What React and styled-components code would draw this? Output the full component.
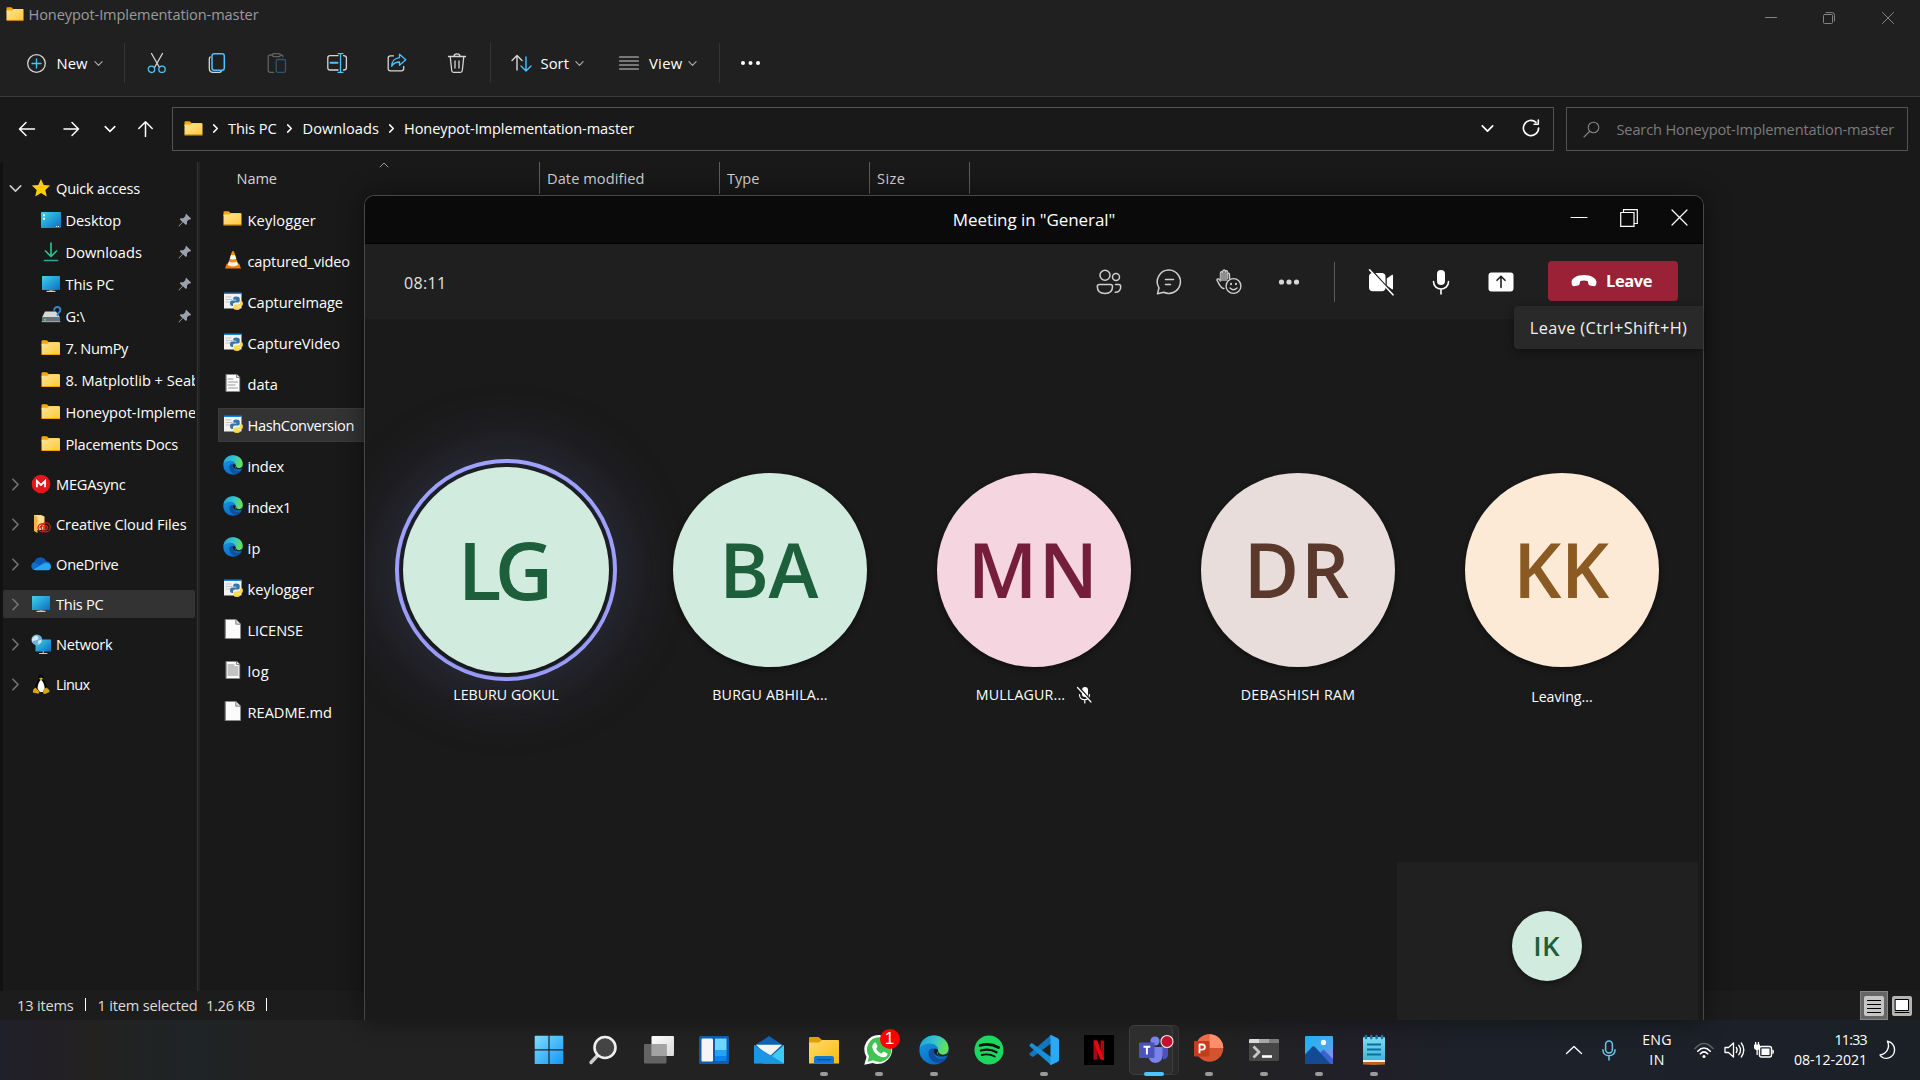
import React, { useLayoutEffect, useRef, useState } from "react";
import styled, { createGlobalStyle, css } from "styled-components";

const GlobalStyle = createGlobalStyle`
  * { box-sizing: border-box; }
  html, body { margin: 0; padding: 0; background: #191919; overflow: hidden; }
  body { font-family: "Open Sans", "Noto Sans", sans-serif; color: #fff; }
  svg { display: block; flex: none; overflow: visible; }
`;

/* ---------- text that keeps a given advance width ---------- */

const TextSpan = styled.span`
  display: block;
  flex: none;
  white-space: nowrap;
  font-size: ${(p) => p.$size || 14.6}px;
  font-weight: ${(p) => p.$weight || 400};
  color: ${(p) => p.$color || "#fff"};
  line-height: 20px;
`;

function Text({ width, size, weight, color, children }) {
  const ref = useRef(null);
  const [spacing, setSpacing] = useState(0);
  useLayoutEffect(() => {
    if (!width || !ref.current) return;
    const range = document.createRange();
    range.selectNodeContents(ref.current);
    const natural = range.getBoundingClientRect().width;
    setSpacing((width + 1.5 - natural) / String(children).length);
  }, [width, children]);
  return (
    <TextSpan
      ref={ref}
      $size={size}
      $weight={weight}
      $color={color}
      style={{ letterSpacing: `${spacing}px` }}
    >
      {children}
    </TextSpan>
  );
}

/* ---------- icons ---------- */

const Icon = ({ w = 20, h = w, vb, children, stroke = "none", sw = 1.3, fill = "none" }) => (
  <svg
    width={w}
    height={h}
    viewBox={vb || `0 0 ${w} ${h}`}
    fill={fill}
    stroke={stroke}
    strokeWidth={sw}
    strokeLinecap="round"
    strokeLinejoin="round"
  >
    {children}
  </svg>
);

const BLUE = "#4cc2ff";

const Chevron = ({ dir = "down", w = 8, color = "#bdbdbd", sw = 1.3 }) => {
  const d = { down: "M1 3l4 4 4-4", right: "M3 1l4 4-4 4", up: "M1 7l4-4 4 4" }[dir];
  return (
    <Icon w={w} vb="0 0 10 10" stroke={color} sw={sw * (10 / w)}>
      <path d={d} />
    </Icon>
  );
};

const FolderIcon = ({ w = 19 }) => (
  <Icon w={w} h={(w * 15) / 19} vb="0 0 19 15">
    <path d="M.5 1.2Q.5.3 1.4.3h4.2L7.6 2h10v3H.5z" fill="#f5a800" />
    <path d="M.5 3.6h6l1.600-1.400h9.800q.6 0 .6.6v11H.5z" fill="url(#folderGrad)" />
    <path d="M.5 13.6h18v.9H.5z" fill="#f0a30a" />
  </Icon>
);

const HiddenSvg = styled.svg`
  position: absolute;
`;

const SharedDefs = () => (
  <HiddenSvg width="0" height="0">
    <defs>
      <linearGradient id="folderGrad" x1="0" y1="0" x2="1" y2="1">
        <stop offset="0" stopColor="#ffe49a" />
        <stop offset="1" stopColor="#ffc93a" />
      </linearGradient>
      <linearGradient id="pcGrad" x1="0" y1="0" x2="1" y2="1">
        <stop offset="0" stopColor="#3fd4e6" />
        <stop offset="1" stopColor="#0b6cc4" />
      </linearGradient>
      <linearGradient id="edgeTop" x1="0" y1="0.3" x2="1" y2="0.6">
        <stop offset="0" stopColor="#1aa5e0" />
        <stop offset=".5" stopColor="#36c6c8" />
        <stop offset="1" stopColor="#6be347" />
      </linearGradient>
      <linearGradient id="edgeLeft" x1="0" y1="0" x2="0.6" y2="1">
        <stop offset="0" stopColor="#1b9de0" />
        <stop offset="1" stopColor="#0669c9" />
      </linearGradient>
      <linearGradient id="winGrad" x1="0" y1="0" x2="1" y2="1">
        <stop offset="0" stopColor="#7fdcff" />
        <stop offset="1" stopColor="#1397f5" />
      </linearGradient>
      <linearGradient id="grayGrad" x1="0" y1="0" x2="1" y2="1">
        <stop offset="0" stopColor="#ffffff" />
        <stop offset="1" stopColor="#d8d8d8" />
      </linearGradient>
      <linearGradient id="photoGrad" x1="0" y1="0" x2="1" y2="1">
        <stop offset="0" stopColor="#1fb0f0" />
        <stop offset=".6" stopColor="#4aa8ee" />
        <stop offset="1" stopColor="#a97fe0" />
      </linearGradient>
      <linearGradient id="noteGrad" x1="0" y1="0" x2="0" y2="1">
        <stop offset="0" stopColor="#7fdcf0" />
        <stop offset="1" stopColor="#3fb2dc" />
      </linearGradient>
      <linearGradient id="explorerGrad" x1="0" y1="0" x2="1" y2="1">
        <stop offset="0" stopColor="#ffdc6b" />
        <stop offset="1" stopColor="#fcb814" />
      </linearGradient>
    </defs>
  </HiddenSvg>
);

const EdgeIcon = ({ w = 20 }) => (
  <Icon w={w} vb="0 0 30 30">
    <circle cx="15" cy="15" r="14.6" fill="url(#edgeLeft)" />
    <path
      d="M9.5 17.5c0 6 4.5 10.5 10 10.5 3 0 6-1.6 8-5-7 2.6-12.2-.6-12.2-5 0-1.6.9-2.9 1.8-3.6-3-2-7.6 0-7.6 3.1z"
      fill="#114f9e"
    />
    <path
      d="M.6 13C1.6 5 7.6.4 15 .4c8.4 0 14.6 6 14.6 12.6 0 4.4-3.4 7-7 7-3.4 0-4.8-1.2-4.8-1.8 0-.8 1.3-1.2 1.3-3.4C19.1 11.6 15.6 8.6 11 8.6c-4.6 0-8.4 1.8-10.4 4.4z"
      fill="url(#edgeTop)"
    />
    <path d="M29.8 19.6c-2.3 2.3-7.3 2.3-9.5.9-2.9-1.6-1.3-2.2-1.1-4.6.3 3.6 6 5.5 10.1 2.2z" fill="#202020" />
    <path d="M15.2 14.3c1.4-1.1 3.9-.3 3.9 1.5 0 1.3-1.3 1.6-1.3 2.5-.2 1.2 1.7 3.3 5.2 2.9-4.5 1.2-9-1.9-7.8-6.9z" fill="#1b1b1b" />
  </Icon>
);

const PcIcon = ({ w = 20 }) => (
  <Icon w={w} h={w} vb="0 0 20 20">
    <rect x="1" y="2" width="18" height="14" rx=".6" fill="url(#pcGrad)" />
    <path d="M8.5 16h3v1.5h-3z" fill="#7c8790" />
    <path d="M6 17.3h8" stroke="#c6ced4" strokeWidth="1.2" />
  </Icon>
);

const PyIcon = () => (
  <Icon w={20} vb="0 0 20 20">
    <rect x="1" y="2" width="17.5" height="15.5" fill="#f2f2f2" />
    <rect x="1" y="1.5" width="17.5" height="1.5" fill="#1783d8" />
    <path d="M3 6h5M3 8.5h6M3 11h4" stroke="#b9bec4" strokeWidth=".9" />
    <path
      d="M13 5.5c-2.5 0-2.7 1-2.7 2v1.3h3v.7H9c-1.3 0-2 1.1-2 2.8s.7 2.7 2 2.7h1v-1.5c0-1.2 1-2 2.1-2h3c.9 0 1.6-.8 1.6-1.7V7.5c0-1.2-1.2-2-3.7-2z"
      fill="#3775ab"
    />
    <path
      d="M14.2 19c2.4 0 2.7-1 2.7-2v-1.2h-3v-.6h4.2c1.3 0 1.8-1.2 1.8-2.7s-.6-2.5-1.8-2.5h-.9v1.4c0 1.2-1 2-2.1 2h-3c-.9 0-1.6.8-1.6 1.7V17c0 1.2 1.3 2 3.7 2z"
      fill="#ffd94a"
    />
  </Icon>
);

const DocIcon = ({ lines = 0 }) => {
  const small = lines > 0;
  return (
    <Icon w={20} vb="0 0 20 20">
      <path
        d={small ? "M3.3 1.5h10.7l2.7 2.7v14.3H3.3z" : "M2.5.5h10.5l4.5 4.5v14.5h-15z"}
        fill="#fbfbfb"
        stroke="#8a8a8a"
        strokeWidth=".8"
      />
      <path
        d={small ? "M13.5 1.5v3h3.2" : "M12.8.5v4.7h4.7"}
        fill="#d9d9d9"
        stroke="#6d6d6d"
        strokeWidth=".8"
      />
      {lines === 4 && <path d="M5 6h5M5.5 9h9M5 12h7M5.5 15h9" stroke="#8c8c8c" strokeWidth=".9" />}
      {lines === 7 && (
        <path d="M5 5h6M5 7h10M5 9h10M5 11h10M5 13h10M5 15h10" stroke="#7d7d7d" strokeWidth=".9" />
      )}
    </Icon>
  );
};

const VlcIcon = () => (
  <Icon w={20} vb="0 0 20 20">
    <path d="M3.8 13.5h12.4l1.8 5H2z" fill="#f57c00" />
    <path d="M9 1.5q1-1 2 0l4.3 13.5q-5.3 3-10.6 0z" fill="#ff8a00" />
    <path d="M8 5h4l1.2 3.8q-3.2 1.4-6.4 0z" fill="#fff" />
    <path d="M5.900 11.6q4.1 1.8 8.2 0l1.1 3.5q-5.2 2.8-10.4 0z" fill="#f4f4f4" />
  </Icon>
);

const StarIcon = () => (
  <Icon w={20} vb="0 0 20 20">
    <path d="M10 1l2.7 6 6.5.6-4.9 4.3 1.5 6.600L10 15.100l-5.800 3.400 1.500-6.600L.8 7.6 7.3 7z" fill="#ffcb0d" />
  </Icon>
);

const DesktopIcon = () => (
  <Icon w={20} vb="0 0 20 20">
    <rect x="0" y="2" width="20" height="16" rx=".8" fill="url(#pcGrad)" />
    <path d="M2 4.3h2v2H2zM2 7.7h2v2H2zM15.2 16h1v1h-1zM17 16h1v1h-1z" fill="#fff" />
  </Icon>
);

const DownloadIcon = () => (
  <Icon w={20} vb="0 0 20 20" stroke="#2fbf8f" sw={1.7}>
    <path d="M10 1v13M4.5 9l5.5 5.5L15.5 9" />
    <path d="M3.5 18.5h13" stroke="#2aa79b" />
  </Icon>
);

const DriveIcon = () => (
  <Icon w={20} vb="0 0 20 20">
    <path d="M4 5.5h11l4 6H1z" fill="#d5d9dc" />
    <rect x="1" y="11" width="18" height="5" rx=".6" fill="#6b7176" />
    <path d="M1 15.7h18" stroke="#b8bdc1" strokeWidth=".8" />
    <rect x="3" y="13" width="2" height="1.5" fill="#37e05a" />
    <path d="M13.2 4c0-4 6.2-4 6.2 0 0 2.5-2.8 2.4-2.9 5M16.4 11.8v.2" stroke="#2f86d0" strokeWidth="1.9" />
  </Icon>
);

const PinIcon = () => (
  <Icon w={14} vb="0 0 14 14">
    <path d="M8.200.8l5 5-1 .8-1.300-.1-2 2 .1 2.600-1.100 1-2.900-2.900L1 13.400l-.5-.5L4.400 9 1.700 6.200l1-1 2.600 0 2.200-2.100V1.600z" fill="#9aa3ab" />
  </Icon>
);

const MegaIcon = () => (
  <Icon w={20} vb="0 0 20 20">
    <circle cx="10" cy="10" r="9.3" fill="#e8141c" />
    <path d="M5.9 13.3V7l4.1 4 4.1-4v6.3" stroke="#fff" strokeWidth="1.9" strokeLinecap="butt" strokeLinejoin="miter" />
  </Icon>
);

const CreativeIcon = () => (
  <Icon w={20} vb="0 0 20 20">
    <path d="M3 1h7l3.500 1.500V16H3z" fill="#ffdf8c" />
    <path d="M3 1l3.500 2v16L3 17z" fill="#f2b544" />
    <g stroke="#e0160f" strokeWidth="1.2">
      <circle cx="11" cy="13.8" r="4" />
      <circle cx="14.8" cy="13.3" r="4.5" />
      <path d="M9 14a2 2 0 1 1 3.5 1.2M14 15.5a2 2 0 1 0-.4-3.5" />
    </g>
  </Icon>
);

const OneDriveIcon = () => (
  <Icon w={20} vb="0 0 20 20">
    <path d="M3 16A4.2 4.2 0 0 1 3.6 8 6 6 0 0 1 15 7.200c3 .2 4.600 2 4.900 4.300L9 16z" fill="#0f6fd0" />
    <path d="M5 5.800a6 6 0 0 1 10 1.400l-6 4.600-5.500-3.700z" fill="#0a5bb5" />
    <path d="M2.500 15.500L12 9.800c4-2 8 .2 8 3 0 2-1.300 3.500-3.300 3.500H4.500z" fill="#2aa5f0" />
  </Icon>
);

const NetworkIcon = () => (
  <Icon w={20} vb="0 0 20 20">
    <rect x="4.5" y="5.5" width="15.5" height="12" fill="url(#pcGrad)" />
    <path d="M8.500 19.500h7.500M12.200 17.500v2" stroke="#c6ced4" strokeWidth="1" />
    <circle cx="5.8" cy="5.8" r="5.4" fill="#6fb3d6" />
    <path d="M2 3.5q3-3 5-.5T4 6.5 3.5 10q-3-2-2.5-5zM7 7q3-2 3.8 0-1 3-3.5 3.5z" fill="#cfe9f5" />
  </Icon>
);

const TuxIcon = () => (
  <Icon w={20} vb="0 0 20 20">
    <path d="M10 .5c-2.300 0-3 1.800-2.800 4.300C7 7.500 4 10.500 4 14.500L7 18h6l3-3.500c0-4-3-7-3.200-9.700C13 2.300 12.300.5 10 .5z" fill="#050505" />
    <path d="M10 5.500c-1.500 1.300-4 6-3.200 9.500L9 18h3l1.500-3c.7-3.500-2-8.200-3.500-9.500z" fill="#fff" />
    <path d="M8 4.600l2-1 2.200 1L10 6.500z" fill="#e5a50d" />
    <path d="M4.500 13.500l4 4.300-1 1.900-5.700-1.200.5-3zM15.500 13.500l2.700 2.500.3 2-4.500 2-2-.8.500-4z" fill="#dba311" />
  </Icon>
);

/* ---------- explorer layout ---------- */

const Desktop = styled.div`
  position: relative;
  width: 1920px;
  height: 1080px;
  overflow: hidden;
  display: flex;
  flex-direction: column;
  background: #191919;
`;

const TitleBar = styled.header`
  display: flex;
  height: 32px;
  background: #202020;
  padding: 4px 3px 0 6px;
`;

const TitleFolder = styled.div`
  width: 22.5px;
  padding-top: 3px;
`;

const CaptionButtons = styled.div`
  display: flex;
  margin: 1px 0 0 auto;
`;

const CaptionButton = styled.div`
  width: ${(p) => p.$w || 58.5}px;
  height: 27px;
  display: flex;
  align-items: center;
  justify-content: center;
  padding-bottom: 2px;
`;

const CommandBar = styled.div`
  display: flex;
  align-items: center;
  height: 65px;
  padding: 0 0 2px 27px;
  background: #202020;
  border-bottom: 1px solid #3b3b3b;
`;

const CommandGroup = styled.div`
  display: flex;
  align-items: center;
  width: ${(p) => p.$w}px;
`;

const Gap = styled.div`
  flex: none;
  width: ${(p) => p.$w}px;
`;

const CommandCell = styled.div`
  width: 60px;
  display: flex;
  justify-content: center;
`;

const Divider = styled.div`
  width: 1px;
  height: 40px;
  background: ${(p) => p.$color || "#343434"};
  margin: 0 ${(p) => p.$right || 0}px 0 0;
`;

const AddressRow = styled.div`
  display: flex;
  align-items: center;
  height: 65px;
  padding: 0 12px 1px 17px;
`;

const NavButtons = styled.nav`
  display: flex;
  align-items: center;
  width: 155px;
`;

const NavSlot = styled.div`
  width: ${(p) => p.$w}px;
  display: flex;
`;

const FieldBox = styled.div`
  display: flex;
  align-items: center;
  height: 44px;
  border: 1px solid #535353;
  width: ${(p) => p.$w}px;
  margin-right: ${(p) => p.$mr || 0}px;
  padding: 0 0 ${(p) => p.$pb || 0}px ${(p) => p.$pl}px;
`;

const Crumb = styled.div`
  display: flex;
  align-items: center;
`;

const Body = styled.main`
  display: flex;
  flex: 1;
  min-height: 0;
`;

const Sidebar = styled.aside`
  width: 196px;
  padding-top: 10px;
  border-left: 3px solid #111;
  overflow: hidden;
`;

const Splitter = styled.div`
  width: 4px;
  background: linear-gradient(90deg, #1d1d1d 0 1px, #303030 1px 2px, #222 2px);
`;

const TreeRow = styled.div`
  display: flex;
  align-items: center;
  height: ${(p) => (p.$root ? 28 : 32)}px;
  margin: ${(p) => (p.$root ? "0 1px 12px 0" : "0 1px 0 0")};
  padding-left: ${(p) => p.$pl}px;
  border-radius: 2px;
  overflow: hidden;
  background: ${(p) => (p.$active ? "#333333" : "transparent")};
`;

const RootList = styled.div`
  padding-top: 10px;
`;

const TreeIcon = styled.div`
  width: ${(p) => p.$w}px;
  flex: none;
  display: flex;
  align-items: center;
  padding-bottom: 1px;
`;

const PinSlot = styled.div`
  margin-left: auto;
  padding-right: 3px;
`;

const FilePane = styled.section`
  flex: 1;
`;

const HeaderRow = styled.div`
  display: flex;
  height: 32px;
`;

const HeaderCell = styled.div`
  position: relative;
  width: ${(p) => p.$w}px;
  padding: 6px 0 0 ${(p) => p.$pl}px;
  border-right: 1px solid #5e5e5e;
`;

const SortCaret = styled.div`
  position: absolute;
  left: 179px;
  top: -2px;
`;

const FileRow = styled.div`
  display: flex;
  align-items: center;
  height: 34px;
  margin: 0 0 7px 18px;
  padding-left: 4px;
  width: 320px;
  border: 1px solid ${(p) => (p.$selected ? "#3c3c3c" : "transparent")};
  background: ${(p) => (p.$selected ? "#333333" : "transparent")};
`;

const FileList = styled.div`
  padding-top: 9px;
`;

const FileIcon = styled.div`
  width: 24.5px;
  padding-bottom: 3px;
`;

const StatusBar = styled.footer`
  display: flex;
  align-items: center;
  height: 29px;
  background: #1c1c1c;
  padding: 0 8px 0 17px;
`;

const StatusTexts = styled.div`
  display: flex;
  align-items: center;
  padding-bottom: 2px;
`;

const StatusMark = styled.div`
  width: 1px;
  height: 13px;
  background: #fff;
  margin: 0 ${(p) => p.$right || 0}px 0 11px;
`;

const ViewModes = styled.div`
  display: flex;
  align-items: center;
  margin-left: auto;
  gap: 4px;
  height: 29px;
`;

const ViewMode = styled.div`
  display: flex;
  align-items: center;
  justify-content: center;
  width: ${(p) => (p.$active ? 28 : 20)}px;
  height: 29px;
  ${(p) =>
    p.$active &&
    css`
      background: #666;
      border: 1px solid #868686;
    `}
`;

/* ---------- meeting window ---------- */

const MeetingWindow = styled.section`
  position: absolute;
  left: 364px;
  top: 195px;
  width: 1340px;
  height: 825px;
  display: flex;
  flex-direction: column;
  border: 1px solid #474747;
  border-bottom: 0;
  border-radius: 10px 10px 0 0;
  background: #1a1a1a;
  box-shadow: 0 0 26px rgba(0, 0, 0, 0.45);
`;

const MeetingTitle = styled.div`
  display: grid;
  grid-template-columns: 1fr auto 1fr;
  align-items: center;
  height: 48px;
  background: #0a0a0a;
  border-bottom: 1px solid #000;
  border-radius: 9px 9px 0 0;
`;

const MeetingCaption = styled.div`
  grid-column: 3;
  display: flex;
  justify-content: flex-end;
  padding-bottom: 2px;
  margin-right: -1px;
`;

const MeetingToolbar = styled.div`
  display: flex;
  align-items: center;
  height: 75px;
  background: #1f1f1f;
  padding-left: 39px;
`;

const Timer = styled.div`
  padding-top: 2px;
`;

const ToolCells = styled.div`
  display: flex;
  align-items: center;
  margin-left: auto;
`;

const ToolCell = styled.div`
  width: 60px;
  display: flex;
  justify-content: center;
`;

const LeaveButton = styled.button`
  display: flex;
  align-items: center;
  width: 130px;
  height: 40px;
  margin: 0 25px 1px 17px;
  padding: 0 0 0 23px;
  border: 0;
  border-radius: 4px;
  background: #9a2136;
  font-family: inherit;
`;

const Tooltip = styled.div`
  position: absolute;
  right: 0;
  top: 110px;
  width: 189px;
  height: 43px;
  display: flex;
  align-items: center;
  justify-content: center;
  background: #292929;
  border-radius: 4px 0 0 4px;
  box-shadow: 0 2px 8px rgba(0, 0, 0, 0.4);
`;

const Stage = styled.div`
  flex: 1;
  display: flex;
  flex-direction: column;
  overflow: hidden;
`;

const Participants = styled.div`
  display: grid;
  grid-template-columns: repeat(5, 264px);
  justify-content: center;
  padding-top: 140px;
`;

const Participant = styled.div`
  display: flex;
  flex-direction: column;
  align-items: center;
`;

const AvatarSlot = styled.div`
  display: flex;
  align-items: center;
  justify-content: center;
  width: 222px;
  height: 222px;
  border-radius: 50%;
  ${(p) =>
    p.$speaking &&
    css`
      border: 4px solid #9ea2ff;
      background: #20202a;
      box-shadow: 0 0 70px 8px rgba(120, 120, 200, 0.22);
    `}
`;

const Avatar = styled.div`
  display: flex;
  align-items: center;
  justify-content: center;
  flex: none;
  width: ${(p) => p.$d}px;
  height: ${(p) => p.$d}px;
  padding: 0 ${(p) => p.$nudge || 0}px ${(p) => (p.$d > 100 ? 3 : 1)}px 0;
  border-radius: 50%;
  background: ${(p) => p.$bg};
  box-shadow: 0 2px 6px rgba(0, 0, 0, 0.45);
`;

const NameLine = styled.div`
  display: flex;
  align-items: center;
  gap: 12px;
  margin-top: ${(p) => p.$top}px;
`;

const SelfView = styled.div`
  display: flex;
  justify-content: center;
  align-self: flex-end;
  width: 301px;
  height: 158px;
  margin: auto 5px 0 0;
  padding: 49px 2px 0 0;
  background: #202020;
`;

/* ---------- taskbar ---------- */

const Taskbar = styled.footer`
  display: flex;
  align-items: stretch;
  height: 60px;
  background: linear-gradient(
    90deg,
    #20202b 0,
    #221f25 45px,
    #232221 90px,
    #1f2426 195px,
    #222222 260px,
    #222222 1220px,
    #211f28 1370px,
    #1d2129 1460px,
    #1c2028 1800px,
    #1b2027 1920px
  );
`;

const Apps = styled.div`
  display: flex;
  align-items: stretch;
  padding-left: 521px;
`;

const AppSlot = styled.div`
  position: relative;
  width: 55px;
  padding-top: 15px;
  display: flex;
  flex-direction: column;
  align-items: center;
`;

const ActiveTile = styled.div`
  position: absolute;
  left: 3px;
  top: 5px;
  width: 44px;
  height: 50px;
  border: 1px solid #3f3f3f;
  border-radius: 5px;
  background: #2e2e2e;
  box-shadow: 6px 0 0 -1px #292929, 6px 0 0 0 #353535;
`;

const AppIcon = styled.div`
  position: relative;
  height: 30px;
`;

const Indicator = styled.div`
  position: relative;
  width: ${(p) => (p.$active ? 20 : 8)}px;
  height: 4px;
  margin-top: 7px;
  border-radius: 2px;
  background: ${(p) => (p.$active ? BLUE : "#9a9a9a")};
`;

const Badge = styled.div`
  position: absolute;
  right: -6px;
  top: -6px;
  width: 20px;
  height: 20px;
  border-radius: 50%;
  background: #ff0000;
  color: #fff;
  font: 17px/20px "Liberation Sans", sans-serif;
  text-align: center;
`;

const Tray = styled.div`
  display: flex;
  align-items: center;
  margin-left: auto;
  width: 356px;
`;

const TraySlot = styled.div`
  display: flex;
  flex: none;
  flex-direction: column;
  align-items: ${(p) => p.$align || "center"};
  width: ${(p) => p.$w}px;
`;

/* ---------- data ---------- */

const quickItems = [
  { label: "Desktop", width: 54, icon: <DesktopIcon />, pinned: true },
  { label: "Downloads", width: 75, icon: <DownloadIcon />, pinned: true },
  { label: "This PC", width: 47, icon: <PcIcon />, pinned: true },
  { label: "G:\\", width: 18, icon: <DriveIcon />, pinned: true },
  { label: "7. NumPy", width: 61, folder: true },
  { label: "8. Matplotlib + Seab", width: 133, folder: true },
  { label: "Honeypot-Impleme", width: 129, folder: true },
  { label: "Placements Docs", width: 111, folder: true },
];

const rootItems = [
  { label: "MEGAsync", width: 68, icon: <MegaIcon /> },
  { label: "Creative Cloud Files", width: 129, icon: <CreativeIcon /> },
  { label: "OneDrive", width: 61, icon: <OneDriveIcon /> },
  { label: "This PC", width: 46, icon: <PcIcon />, active: true },
  { label: "Network", width: 55, icon: <NetworkIcon /> },
  { label: "Linux", width: 32, icon: <TuxIcon /> },
];

const files = [
  ["Keylogger", 67, <FolderIcon />],
  ["captured_video", 101, <VlcIcon />],
  ["CaptureImage", 94, <PyIcon />],
  ["CaptureVideo", 91, <PyIcon />],
  ["data", 29, <DocIcon lines={4} />],
  ["HashConversion", 105, <PyIcon />],
  ["index", 35, <EdgeIcon />],
  ["index1", 42, <EdgeIcon />],
  ["ip", 12, <EdgeIcon />],
  ["keylogger", 65, <PyIcon />],
  ["LICENSE", 54, <DocIcon />],
  ["log", 20, <DocIcon lines={7} />],
  ["README.md", 83, <DocIcon />],
];

const people = [
  { initials: "LG", iw: 87, nudge: 8, size: 80.5, d: 206, bg: "#d1ecdf", fg: "#1d5f3b", name: "LEBURU GOKUL", nw: 104, speaking: true },
  { initials: "BA", iw: 97, nudge: 3, size: 75.5, d: 194, bg: "#d1ecdf", fg: "#1d5f3b", name: "BURGU ABHILA...", nw: 114 },
  { initials: "MN", iw: 130, nudge: 1, size: 75.5, d: 194, bg: "#f5d5e0", fg: "#741e3c", name: "MULLAGUR...", nw: 88, muted: true },
  { initials: "DR", iw: 106, nudge: 1, size: 75.5, d: 194, bg: "#e8ddda", fg: "#5a392c", name: "DEBASHISH RAM", nw: 113 },
  { initials: "KK", iw: 94, nudge: 2, size: 75.5, d: 194, bg: "#fce9d6", fg: "#8a5a22", name: "Leaving...", nw: 60, leaving: true },
];

/* ---------- explorer pieces ---------- */

const Caret = (props) => <Chevron w={9} color="#a8a8a8" sw={1.2} {...props} />;

function Commands() {
  return (
    <CommandBar>
      <CommandGroup $w={97}>
        <Icon w={19} stroke="#d6d6d6" sw={1.3}>
          <circle cx="9.5" cy="9.5" r="8.8" />
          <path d="M9.5 5v9M5 9.5h9" stroke={BLUE} />
        </Icon>
        <Gap $w={10.5} />
        <Text width={29.5} size={14.8}>New</Text>
        <Gap $w={6.5} />
        <Caret />
      </CommandGroup>
      <Divider $right={2} />
      <CommandCell>
        <Icon w={20} stroke="#d6d6d6">
          <path d="M4.5.5l8 14M15.5.5l-8 14" />
          <g stroke={BLUE}>
            <circle cx="4.5" cy="16.3" r="3.2" />
            <circle cx="15" cy="16.3" r="3.2" />
          </g>
        </Icon>
      </CommandCell>
      <CommandCell>
        <Icon w={20} stroke="#d6d6d6">
          <path d="M3.2 4c-.6.5-.9 1-.9 2v9.5c0 2.5 1.2 3.8 3.7 3.8h6.5c.7 0 1.3-.3 1.7-.8" />
          <rect x="5" y=".8" width="12.3" height="16.5" rx="2.2" stroke={BLUE} strokeWidth="1.5" />
        </Icon>
      </CommandCell>
      <CommandCell>
        <Icon w={20} stroke="#616161">
          <path d="M5.5 2H3.3C2 2 1.2 2.8 1.2 4.1v13.1c0 1.3.8 2.1 2.1 2.1h3.4M13.3 2h1c1 0 1.6.6 1.6 1.6" />
          <rect x="5.5" y=".7" width="7.8" height="2.9" rx="1.4" />
          <rect x="9.2" y="6.5" width="9.3" height="12.8" rx="1.5" stroke="#285a73" />
        </Icon>
      </CommandCell>
      <CommandCell>
        <Icon w={20} stroke="#d6d6d6">
          <path d="M11 2.6H3C1.7 2.6.8 3.5.8 4.8v10c0 1.3.9 2.2 2.2 2.2h8M16.5 2.6c2 0 2.9.9 2.9 2.2v10c0 1.3-.9 2.2-2.9 2.2" />
          <path d="M13.5.7v18.6M11 .7h5M11 19.3h5" stroke={BLUE} />
          <path d="M3.5 9.8h7" stroke={BLUE} strokeWidth="2" />
        </Icon>
      </CommandCell>
      <CommandCell>
        <Icon w={20} stroke="#d6d6d6">
          <path d="M6.5 2.8H3.4C2 2.8 1.2 3.6 1.2 5v10.5c0 1.5.8 2.3 2.2 2.3h11c1.5 0 2.3-.8 2.3-2.3v-2" />
          <path d="M12.5 1.2l6.3 5.5-6.3 5.5V9c-3.5 0-6 1-7.8 4.3C4.8 8.5 7.8 5 12.5 4.6z" stroke={BLUE} />
        </Icon>
      </CommandCell>
      <CommandCell>
        <Icon w={20} stroke="#d6d6d6">
          <path d="M1.5 3.5h17M7 3.3C7 1.7 8.2.8 10 .8s3 .9 3 2.5M3.2 3.5l1.5 14c.1 1 .9 1.8 1.9 1.8h6.8c1 0 1.8-.8 1.9-1.8l1.5-14M8 8v7M12 8v7" />
        </Icon>
      </CommandCell>
      <Gap $w={3} />
      <Divider $right={20} />
      <CommandGroup $w={108}>
        <Icon w={21} stroke="#d6d6d6" sw={1.4}>
          <path d="M6 17V3M1 7.5L6 2.5l5 5" />
          <path d="M15 4v14M10 13l5 5 5-5" stroke={BLUE} />
        </Icon>
        <Gap $w={8.5} />
        <Text width={27} size={14.8}>Sort</Text>
        <Gap $w={5.5} />
        <Caret />
      </CommandGroup>
      <CommandGroup $w={100}>
        <Icon w={20} stroke="#d0d0d0" sw={1.2}>
          <path d="M.6 4h18.8M.6 8h18.8M.6 12h18.8M.6 16h18.8" />
        </Icon>
        <Gap $w={10} />
        <Text width={32} size={14.8}>View</Text>
        <Gap $w={5.5} />
        <Caret />
      </CommandGroup>
      <Divider $right={20} />
      <Icon w={22} h={6} fill="#fff">
        <circle cx="3" cy="3" r="2" />
        <circle cx="10.5" cy="3" r="2" />
        <circle cx="18" cy="3" r="2" />
      </Icon>
    </CommandBar>
  );
}

function Address() {
  const sep = <Chevron dir="right" w={9} color="#fff" sw={1.5} />;
  return (
    <AddressRow>
      <NavButtons>
        <NavSlot $w={46}>
          <Icon w={20} stroke="#fff" sw={1.5}>
            <path d="M17.5 10H3M9 3.5L2.5 10 9 16.5" />
          </Icon>
        </NavSlot>
        <NavSlot $w={40.5}>
          <Icon w={18} h={20} stroke="#fff" sw={1.5}>
            <path d="M1 10h14.5M9 3.5l6.5 6.5L9 16.5" />
          </Icon>
        </NavSlot>
        <NavSlot $w={33.5}>
          <Chevron w={12} color="#fff" sw={1.5} />
        </NavSlot>
        <Icon w={18} h={20} stroke="#fff" sw={1.5}>
          <path d="M8.500 17.500V3M1.800 9.500L8.500 2.800l6.700 6.700" />
        </Icon>
      </NavButtons>
      <FieldBox $w={1382} $mr={12} $pl={11} $pb={2}>
        <FolderIcon />
        <Gap $w={7.5} />
        <Crumb>
          {sep}
          <Gap $w={8.5} />
          <Text width={47}>This PC</Text>
          <Gap $w={8.5} />
          {sep}
          <Gap $w={8.5} />
          <Text width={75}>Downloads</Text>
          <Gap $w={7.5} />
          {sep}
          <Gap $w={8.5} />
          <Text width={228.5}>Honeypot-Implementation-master</Text>
        </Crumb>
        <Gap $w={847} />
        <Chevron w={13} color="#fff" sw={1.7} />
        <Gap $w={28} />
        <Icon w={18} stroke="#fff" sw={1.6}>
          <path d="M16.6 9A7.6 7.6 0 1 1 14 3.3M16.3 1v4.2h-4.2" />
        </Icon>
      </FieldBox>
      <FieldBox $w={342} $pl={16}>
        <Icon w={17} stroke="#858585" sw={1.1}>
          <circle cx="10.5" cy="6.5" r="5.3" />
          <path d="M6.5 10.5L1 16" />
        </Icon>
        <Gap $w={16.5} />
        <Text width={276} color="#7c7c7c">Search Honeypot-Implementation-master</Text>
      </FieldBox>
    </AddressRow>
  );
}

function Tree() {
  return (
    <Sidebar>
      <TreeRow $pl={6}>
        <Chevron w={13} color="#c8c8c8" sw={1.6} />
        <Gap $w={9} />
        <TreeIcon $w={25}>
          <StarIcon />
        </TreeIcon>
        <Text width={82.5}>Quick access</Text>
      </TreeRow>
      {quickItems.map((q) => (
        <TreeRow key={q.label} $pl={38}>
          <TreeIcon $w={24.5}>{q.folder ? <FolderIcon w={19.5} /> : q.icon}</TreeIcon>
          <Text width={q.width}>{q.label}</Text>
          {q.pinned && (
            <PinSlot>
              <PinIcon />
            </PinSlot>
          )}
        </TreeRow>
      ))}
      <RootList>
        {rootItems.map((r) => (
          <TreeRow key={r.label} $root $pl={6} $active={r.active}>
            <Chevron dir="right" w={13} color="#767676" sw={1.6} />
            <Gap $w={9} />
            <TreeIcon $w={25}>{r.icon}</TreeIcon>
            <Text width={r.width}>{r.label}</Text>
          </TreeRow>
        ))}
      </RootList>
    </Sidebar>
  );
}

function Files() {
  return (
    <FilePane>
      <HeaderRow>
        <HeaderCell $w={340} $pl={36.5}>
          <Text width={39} color="#d4d4d4">Name</Text>
          <SortCaret>
            <Chevron dir="up" w={10} color="#9a9a9a" sw={1} />
          </SortCaret>
        </HeaderCell>
        <HeaderCell $w={180} $pl={7}>
          <Text width={96} color="#d4d4d4">Date modified</Text>
        </HeaderCell>
        <HeaderCell $w={150} $pl={7}>
          <Text width={31} color="#d4d4d4">Type</Text>
        </HeaderCell>
        <HeaderCell $w={100} $pl={7}>
          <Text width={27} color="#d4d4d4">Size</Text>
        </HeaderCell>
      </HeaderRow>
      <FileList>
        {files.map(([label, width, icon]) => (
          <FileRow key={label} $selected={label === "HashConversion"}>
            <FileIcon>{icon}</FileIcon>
            <Text width={width}>{label}</Text>
          </FileRow>
        ))}
      </FileList>
    </FilePane>
  );
}

/* ---------- meeting ---------- */

const MicGlyph = ({ w = 18, h = 26, color = "#fff" }) => (
  <Icon w={w} h={h} vb="0 0 18 26" stroke={color} sw={1.6}>
    <rect x="5" y="1" width="8" height="15" rx="4" fill={color} stroke="none" />
    <path d="M1.5 12.5c0 10 15 10 15 0M9 20.5v4.5" />
  </Icon>
);

function Meeting() {
  return (
    <MeetingWindow>
      <MeetingTitle>
        <span />
        <Text width={161} size={17}>Meeting in "General"</Text>
        <MeetingCaption>
          <CaptionButton $w={50}>
            <Icon w={16} h={16} stroke="#fff" sw={1.2}><path d="M0 7.5h16" /></Icon>
          </CaptionButton>
          <CaptionButton $w={50}>
            <Icon w={18} stroke="#fff" sw={1.2}>
              <path d="M.7 3.5h13.3v13.8H.7zM3.5 3.3V.7h13.8v13.8H14.5" strokeLinejoin="miter" />
            </Icon>
          </CaptionButton>
          <CaptionButton $w={50}>
            <Icon w={17} stroke="#fff" sw={1.2}><path d="M1 1l15 15M16 1L1 16" /></Icon>
          </CaptionButton>
        </MeetingCaption>
      </MeetingTitle>
      <MeetingToolbar>
        <Timer>
          <Text width={41} size={16} color="#e2e2e2">08:11</Text>
        </Timer>
        <ToolCells>
          <ToolCell>
            <Icon w={26} stroke="#cfcfcf" sw={1.5}>
              <circle cx="9" cy="6.3" r="5" />
              <circle cx="20" cy="8" r="3.5" />
              <path d="M3.5 15.5h11c1.2 0 2 .8 2 2 0 4.5-2.5 7-7.5 7s-7.7-2.5-7.7-7c0-1.2 1-2 2.200-2zM19.5 15.5h3.2c1.2 0 2 .8 2 2 0 3.5-1.8 5.8-5.5 5.8" />
            </Icon>
          </ToolCell>
          <ToolCell>
            <Icon w={26} stroke="#cfcfcf" sw={1.5}>
              <path d="M13.3 1A11.7 11.7 0 1 1 7.8 23.3L1.5 24.8l1.5-6A11.7 11.7 0 0 1 13.3 1zM9.5 10.5h8M9.5 15.5h5" />
            </Icon>
          </ToolCell>
          <ToolCell>
            <Icon w={26} stroke="#cfcfcf" sw={1.4}>
              <path d="M8 19.5c-3.500 0-4.300-3.500-7-8.300-.4-1.400 1.600-2 2.700-.4L4.500 12V4c0-1.700 2.300-1.700 2.300 0v5V2.400c0-1.800 2.400-1.800 2.400 0V9 3c0-1.700 2.300-1.700 2.300 0v6.500-4c0-1.600 2-1.600 2 0v4.300" />
              <path d="M4.500 4v8h7V3z" fill="#8f8f8f" stroke="none" />
              <circle cx="17.5" cy="17" r="7.4" fill="#1f1f1f" />
              <path d="M14 19q3.500 3.300 7 0" />
              <path d="M15 14.8v.4M20 14.8v.4" strokeWidth="2" />
            </Icon>
          </ToolCell>
          <ToolCell>
            <Icon w={22} h={6} fill="#d6d6d6">
              <circle cx="3.5" cy="3" r="2.6" />
              <circle cx="11" cy="3" r="2.6" />
              <circle cx="18.5" cy="3" r="2.6" />
            </Icon>
          </ToolCell>
          <Gap $w={15} />
          <Divider $color="#5c5c5c" $right={16} />
          <ToolCell>
            <Icon w={26} vb="0 0 26 26">
              <path d="M4.5 4H14c2 0 3.5 1.5 3.5 3.5v11.2c0 2-1.5 3.5-3.5 3.5H4.5c-2 0-3.5-1.5-3.5-3.5V7.5C1 5.5 2.5 4 4.5 4zM18.8 9.5L24 5.8q1-.5 1 .6v13.2q0 1.2-1 .6l-5.2-3.7z" fill="#fff" />
              <path d="M3.8 1.3L27 27" stroke="#1f1f1f" strokeWidth="1.6" />
              <path d="M1.5.8l23.5 25" stroke="#fff" strokeWidth="1.6" />
            </Icon>
          </ToolCell>
          <ToolCell>
            <MicGlyph />
          </ToolCell>
          <ToolCell>
            <Icon w={26} h={20}>
              <rect x=".5" y=".5" width="25" height="19" rx="3" fill="#fff" />
              <path d="M13 15.5v-11M9 8.3l4-4 4 4" stroke="#1f1f1f" strokeWidth="1.6" />
            </Icon>
          </ToolCell>
        </ToolCells>
        <LeaveButton>
          <Icon w={26} h={12}>
            <path d="M13 0C19.5 0 25 2.8 25.4 6.8c.2 1.9-.4 4.6-2.3 4.4l-4-.7c-1.3-.3-2-1.3-2-2.5l-.1-1.8q-4-1.400-8 0L8.900 8c0 1.200-.7 2.200-2 2.500l-4 .7C1 11.400.4 8.700.6 6.800 1 2.800 6.500 0 13 0z" fill="#fff" />
          </Icon>
          <Gap $w={9} />
          <Text width={44.5} size={16.5} weight={700}>Leave</Text>
        </LeaveButton>
      </MeetingToolbar>
      <Stage>
        <Participants>
          {people.map((p) => (
            <Participant key={p.initials}>
              <AvatarSlot $speaking={p.speaking}>
                <Avatar $d={p.d} $bg={p.bg} $nudge={p.nudge}>
                  <Text size={p.size} width={p.iw} weight={600} color={p.fg}>{p.initials}</Text>
                </Avatar>
              </AvatarSlot>
              <NameLine $top={p.leaving ? 6 : 4}>
                <Text width={p.nw} size={14.2}>{p.name}</Text>
                {p.muted && (
                  <Icon w={15} h={16}>
                    <rect x="5" y="0" width="6" height="10" rx="3" fill="#fff" />
                    <path d="M2.5 7.5c0 7 10 7 10 0M7.8 12.5V16" stroke="#fff" strokeWidth="1.2" />
                    <path d="M2 0l13 15" stroke="#1a1a1a" strokeWidth="1.5" />
                    <path d="M.5.5l13.5 14.5" stroke="#fff" strokeWidth="1.2" />
                  </Icon>
                )}
              </NameLine>
            </Participant>
          ))}
        </Participants>
        <SelfView>
          <Avatar $d={70} $bg="#d1ecdf">
            <Text size={27.5} width={25} weight={600} color="#1d5f3b">IK</Text>
          </Avatar>
        </SelfView>
      </Stage>
      <Tooltip>
        <Text width={156} size={16.3} color="#f2f2f2">Leave (Ctrl+Shift+H)</Text>
      </Tooltip>
    </MeetingWindow>
  );
}

/* ---------- taskbar icons ---------- */

const AppGlyph = ({ children }) => <Icon w={30} vb="0 0 30 30">{children}</Icon>;

const apps = [
  {
    key: "start",
    icon: (
      <AppGlyph>
        <path d="M.7 1.5q0-.7.7-.7h13v13.500H.7zM15.600.8h13q.7 0 .7.7v12.800H15.600zM.7 15.600h13.700v13.500h-13q-.7 0-.7-.7zM15.600 15.600h13.700v12.800q0 .7-.7.7h-13z" fill="url(#winGrad)" />
      </AppGlyph>
    ),
  },
  {
    key: "search",
    icon: (
      <AppGlyph>
        <path d="M9.500 19.500L2 27.500" stroke="#c9cdd1" strokeWidth="3.4" />
        <circle cx="16" cy="12.5" r="10.5" fill="#444" stroke="#eef0f2" strokeWidth="2.6" />
      </AppGlyph>
    ),
  },
  {
    key: "task view",
    icon: (
      <AppGlyph>
        <rect x="7.5" y="1" width="22.5" height="20" rx="1" fill="url(#grayGrad)" />
        <rect x="0" y="9" width="22.5" height="19.5" rx="1" fill="#6f6f6f" opacity=".85" />
        <rect x="7.5" y="9" width="15" height="12" fill="#a3a3a3" />
      </AppGlyph>
    ),
  },
  {
    key: "widgets",
    icon: (
      <AppGlyph>
        <rect x="0" y="1" width="30" height="28" rx="1.5" fill="#0f5cae" />
        <rect x="2.5" y="3.5" width="11.5" height="23" rx="1.2" fill="#f5f5f5" />
        <rect x="16" y="3.5" width="11.5" height="12" fill="#6bd7ff" />
        <rect x="16" y="15.5" width="11.5" height="5.5" fill="#22a5f5" />
        <rect x="16" y="21" width="11.5" height="5" fill="#0a83ea" />
      </AppGlyph>
    ),
  },
  {
    key: "mail",
    icon: (
      <AppGlyph>
        <path d="M0 11L15 1l15 10z" fill="#0b63b5" />
        <path d="M0 10h30v18.5H0z" fill="#0d5fae" />
        <path d="M2 9.8h26L15 22z" fill="#f3f3f3" />
        <path d="M30 10v18.5H9z" fill="#3ccbf4" />
        <path d="M0 10l30 18.5H1q-1 0-1-1z" fill="#1c96e3" />
      </AppGlyph>
    ),
  },
  {
    key: "explorer",
    open: true,
    icon: (
      <AppGlyph>
        <path d="M0 3q0-1 1-1h8.500l3.500 3h16v7H0z" fill="#e0a000" />
        <path d="M0 7.500h10L13 5h16q1 0 1 1v22.500H0z" fill="url(#explorerGrad)" />
        <path d="M5 28.500V23q0-2 2-2h16q2 0 2 2v5.500z" fill="#1478d0" />
        <path d="M8.500 24.600h13" stroke="#0a4c98" strokeWidth="1.2" />
      </AppGlyph>
    ),
  },
  {
    key: "whatsapp",
    open: true,
    badge: "1",
    icon: (
      <AppGlyph>
        <path d="M15.500 0A14.500 14.500 0 1 1 8.700 28L.3 29.800 2.500 22A14.500 14.500 0 0 1 15.500 0z" fill="#fff" />
        <path d="M15.500 2.300a12.300 12.300 0 1 1-6.400 23L3.600 26.700l1.500-5.200A12.300 12.300 0 0 1 15.500 2.300z" fill="#3fc351" />
        <path d="M10.200 7.800c.6-.6 1.500-.5 1.900.2l1.300 3c.2.5 0 1-.4 1.500l-.9 1.200c1.200 2.300 3 4 5.400 5l1.300-1.600c.4-.4.8-.5 1.300-.3l2.900 1.500c.6.3.6 1 .3 1.700-.7 1.600-2.400 2.400-4.200 2.200C13.500 21.500 9 17 8.300 12.300c-.2-1.700.7-3.500 1.900-4.500z" fill="#fff" />
      </AppGlyph>
    ),
  },
  { key: "edge", open: true, icon: <EdgeIcon w={30} /> },
  {
    key: "spotify",
    icon: (
      <AppGlyph>
        <circle cx="15" cy="15" r="14.5" fill="#1ed760" />
        <g stroke="#0d0d0d" fill="none">
          <path d="M6 10.5q10-2.800 18.500 2" strokeWidth="2.8" />
          <path d="M7 15.5q8.500-2.300 15.500 1.700" strokeWidth="2.3" />
          <path d="M7.800 20q7-1.800 13 1.500" strokeWidth="1.9" />
        </g>
      </AppGlyph>
    ),
  },
  {
    key: "vscode",
    open: true,
    icon: (
      <AppGlyph>
        <path d="M22 0v8.500L4 22 1.500 20.800Q-.5 19.500 1 18z" fill="#1276bd" />
        <path d="M1 11.500Q-.3 10 1.200 9L3 8l19 14v8z" fill="#1690d8" />
        <path d="M22 0l6.800 3.200q1.200.6 1.200 2v19.600q0 1.400-1.200 2L22 30q-1 0-1.300-1l.8-1V2l-.8-1z" fill="#2aa9f5" />
      </AppGlyph>
    ),
  },
  {
    key: "netflix",
    icon: (
      <AppGlyph>
        <path d="M0 0h30v30H0z" fill="#000" />
        <path d="M9.500 5.500h3.800v18.800l-3.800.6zM16.500 5.500h3.500v19.400l-3.500-.6z" fill="#b1060f" />
        <path d="M9.500 5.500h3.800L20 24.900l-3.800-.6z" fill="#e50914" />
      </AppGlyph>
    ),
  },
  {
    key: "teams",
    open: true,
    active: true,
    icon: (
      <AppGlyph>
        <circle cx="16" cy="6" r="4.6" fill="#7b83eb" />
        <path d="M22 12h7v8q-.5 4-5 4.500z" fill="#4a53bc" />
        <path d="M11 12h12.500v8.500q-.5 7-7 7.500-6-.5-7-6z" fill="#7b83eb" />
        <rect x="0" y="7.5" width="15.5" height="15.5" rx="1" fill="#4b53bc" />
        <path d="M4.500 11.800h6.800M7.900 12v7.500" stroke="#fff" strokeWidth="2" strokeLinecap="butt" />
        <circle cx="28" cy="6.5" r="6" fill="#c50f2e" stroke="#e9e9e9" strokeWidth="1.1" />
      </AppGlyph>
    ),
  },
  {
    key: "powerpoint",
    open: true,
    icon: (
      <AppGlyph>
        <circle cx="15.500" cy="13" r="13.800" fill="#d35230" />
        <path d="M15.500-.8A13.800 13.800 0 0 0 1.700 13h13.800z" fill="#ed6c47" />
        <path d="M15.500-.8A13.800 13.800 0 0 1 29.300 13H15.500z" fill="#ff8f6b" />
        <rect x="0" y="6" width="15.500" height="15.500" rx="1" fill="#c43e1c" />
        <path d="M5.500 18.300V9.500h2.700c3.600 0 3.600 5.200 0 5.200H5.500" stroke="#fff" strokeWidth="1.8" fill="none" strokeLinecap="butt" />
      </AppGlyph>
    ),
  },
  {
    key: "terminal",
    open: true,
    icon: (
      <AppGlyph>
        <rect x="0" y="4" width="30" height="22" rx="1.3" fill="#474747" />
        <path d="M0 8V5.300Q0 4 1.300 4H10v4z" fill="#dcdcdc" />
        <path d="M10 4h10v4H10z" fill="#a8a8a8" />
        <path d="M20 4h8.700Q30 4 30 5.300V8H20z" fill="#7d7d7d" />
        <path d="M4.500 11.500l5.500 5.500-5.500 5.500" stroke="#c8c8c8" strokeWidth="2.8" fill="none" strokeLinecap="butt" />
        <path d="M13 21.500h10" stroke="#fff" strokeWidth="2.6" strokeLinecap="butt" />
      </AppGlyph>
    ),
  },
  {
    key: "photos",
    open: true,
    icon: (
      <AppGlyph>
        <rect x="1" y="1" width="28" height="28" rx="1.2" fill="url(#photoGrad)" />
        <path d="M14 20l5.500-5.500L29 24v4q0 1-1 1H14z" fill="#3b62d0" />
        <path d="M1 19.500l7-7.500q1.500-1.500 3 0L26.500 29H2q-1 0-1-1z" fill="#134a91" />
        <circle cx="19.5" cy="7.5" r="2.7" fill="#fff" />
      </AppGlyph>
    ),
  },
  {
    key: "notepad",
    open: true,
    icon: (
      <AppGlyph>
        <rect x="4" y="2" width="22" height="24" rx="1" fill="url(#noteGrad)" />
        <path d="M4 25h22v2H4z" fill="#f2f2f2" />
        <path d="M4 27h22v2.500q-11 .8-22 0z" fill="#b5651d" />
        <path d="M8 9.500h14M8 14.500h14M8 19.500h14" stroke="#0b6f9d" strokeWidth="2" strokeLinecap="butt" />
        <path d="M7 1v2M12.300 1v2M17.600 1v2M23 1v2" stroke="#0e7aa8" strokeWidth="2.6" />
      </AppGlyph>
    ),
  },
];

function Bottom() {
  return (
    <Taskbar>
      <Apps>
        {apps.map((a) => (
          <AppSlot key={a.key}>
            {a.active && <ActiveTile />}
            <AppIcon>
              {a.icon}
              {a.badge && <Badge>{a.badge}</Badge>}
            </AppIcon>
            {a.open && <Indicator $active={a.active} />}
          </AppSlot>
        ))}
      </Apps>
      <Tray>
        <TraySlot $w={20}>
          <Icon w={18} h={10} stroke="#fff" sw={1.4}><path d="M1.500 8.500L9 1.500l7.500 7" /></Icon>
        </TraySlot>
        <TraySlot $w={50}>
          <Icon w={14} h={21} stroke="#6cc8ea" sw={1.5}>
            <rect x="3.6" y="1" width="6.8" height="12" rx="3.4" />
            <path d="M.9 9.800c0 8 12.200 8 12.200 0M7 16v4" />
          </Icon>
        </TraySlot>
        <TraySlot $w={46}>
          <Text width={28} size={14.2}>ENG</Text>
          <Text width={14} size={14.2}>IN</Text>
        </TraySlot>
        <Gap $w={13} />
        <TraySlot $w={22}>
          <Icon w={20} h={17} stroke="#fff" sw={1.6}>
            <path d="M1 6.500Q10-3.500 19 6.500" stroke="#5c6067" />
            <path d="M3.700 9.200q6.300-6.400 12.600 0M6.300 11.800q3.700-3.700 7.400 0" />
            <circle cx="10" cy="14.500" r="1.500" fill="#fff" stroke="none" />
          </Icon>
        </TraySlot>
        <Gap $w={8} />
        <TraySlot $w={22}>
          <Icon w={21} h={20} stroke="#fff" sw={1.3}>
            <path d="M1 7.500h3.500L9.500 3v14l-5-4.500H1zM12.300 7.500q1.800 2.500 0 5M14.800 5.300q3.500 4.700 0 9.400M17.300 3q5 7 0 14" />
          </Icon>
        </TraySlot>
        <Gap $w={8} />
        <TraySlot $w={22}>
          <Icon w={20} h={17}>
            <rect x="5.500" y="4.500" width="12" height="10.500" rx="2" stroke="#fff" strokeWidth="1.4" />
            <rect x="7.500" y="6.500" width="8" height="6.500" fill="#fff" />
            <path d="M18.300 7.500q1.700 0 1.700 2.200t-1.700 2.200z" fill="#fff" />
            <path d="M0 2.500h6v3q0 2.300-2.200 2.500V13H2.500V8Q0 7.800 0 5.500zM1 0h1.300v2.500H1zM3.800 0h1.300v2.500H3.800z" fill="#fff" />
          </Icon>
        </TraySlot>
        <Gap $w={19} />
        <TraySlot $w={73} $align="flex-end">
          <Text width={31} size={14.2}>11:33</Text>
          <Text width={71.5} size={14.2}>08-12-2021</Text>
        </TraySlot>
        <Gap $w={12} />
        <Icon w={17} h={20} stroke="#fff" sw={1.4}>
          <path d="M8.500 1.200c9.500 2 9.500 15.800-.5 17.200-3 .2-5.500-1-7-3.400C8.500 13.500 11 7 8.500 1.200z" />
        </Icon>
      </Tray>
    </Taskbar>
  );
}

export default function App() {
  return (
    <Desktop>
      <GlobalStyle />
      <SharedDefs />
      <TitleBar>
        <TitleFolder><FolderIcon w={18} /></TitleFolder>
        <Text width={228.5} color="#9b9b9b">Honeypot-Implementation-master</Text>
        <CaptionButtons>
          <CaptionButton>
            <Icon w={12} stroke="#838383" sw={1}><path d="M.5 5.5h11" /></Icon>
          </CaptionButton>
          <CaptionButton>
            <Icon w={12} stroke="#838383" sw={1}>
              <rect x=".5" y="2.5" width="9" height="9" rx="1" />
              <path d="M3 .6h6q2.500 0 2.500 2.500V9" />
            </Icon>
          </CaptionButton>
          <CaptionButton>
            <Icon w={12} stroke="#838383" sw={1}><path d="M.5.5l11 11M11.5.5l-11 11" /></Icon>
          </CaptionButton>
        </CaptionButtons>
      </TitleBar>
      <Commands />
      <Address />
      <Body>
        <Tree />
        <Splitter />
        <Files />
      </Body>
      <StatusBar>
        <StatusTexts>
          <Text width={55} color="#dedede">13 items</Text>
          <StatusMark $right={12} />
          <Text width={98.5} color="#dedede">1 item selected</Text>
          <Gap $w={8.5} />
          <Text width={47.5} color="#dedede">1.26 KB</Text>
          <StatusMark />
        </StatusTexts>
        <ViewModes>
          <ViewMode $active>
            <Icon w={20}>
              <rect width="20" height="20" rx="2" fill="#c6c6c6" />
              <path d="M3 4.500h14M3 8.500h14M3 12.500h14M3 16.500h14" stroke="#000" strokeWidth="1" strokeLinecap="butt" />
            </Icon>
          </ViewMode>
          <ViewMode>
            <Icon w={20}>
              <rect width="20" height="20" rx="2" fill="#b4b4b4" />
              <rect x="3.5" y="3.5" width="13" height="11" fill="#fff" stroke="#000" strokeWidth="1" />
              <path d="M3 16.500h14" stroke="#000" strokeWidth="1" />
            </Icon>
          </ViewMode>
        </ViewModes>
      </StatusBar>
      <Meeting />
      <Bottom />
    </Desktop>
  );
}
